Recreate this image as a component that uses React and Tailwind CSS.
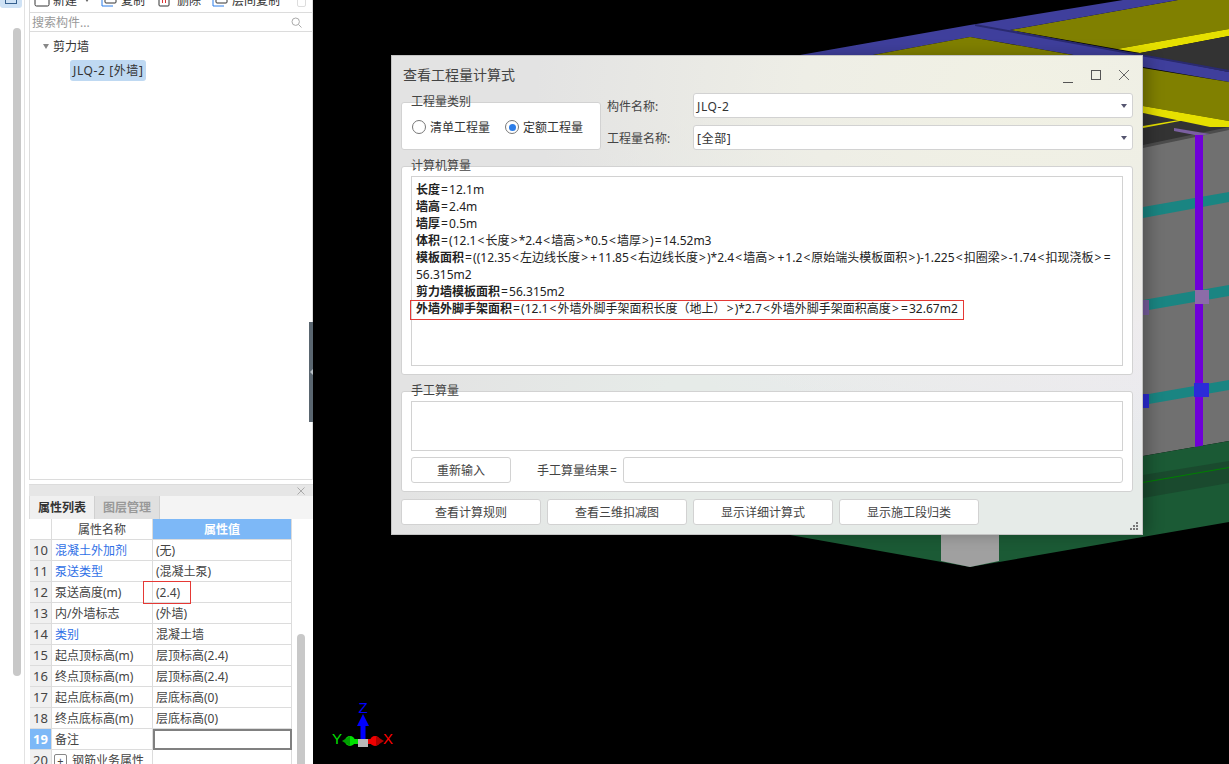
import React from "react";

const F = "font-['Noto_Sans','Noto_Sans_CJK_SC',sans-serif]";

const rows = [
  ["10", "混凝土外加剂", "(无)", true],
  ["11", "泵送类型", "(混凝土泵)", true],
  ["12", "泵送高度(m)", "(2.4)", false],
  ["13", "内/外墙标志", "(外墙)", false],
  ["14", "类别", "混凝土墙", true],
  ["15", "起点顶标高(m)", "层顶标高(2.4)", false],
  ["16", "终点顶标高(m)", "层顶标高(2.4)", false],
  ["17", "起点底标高(m)", "层底标高(0)", false],
  ["18", "终点底标高(m)", "层底标高(0)", false],
];

function Ops({ children }) {
  return children.split(/([<>=+])/).map((part, i) =>
    /^[<>=+]$/.test(part) ? (
      <span key={i} className="mx-[1.1px]">{part}</span>
    ) : (
      <React.Fragment key={i}>{part}</React.Fragment>
    )
  );
}

function Scene() {
  return (
    <svg viewBox="313 0 916 764" className="absolute inset-0 w-full h-full">
      <rect x="313" y="0" width="916" height="764" fill="#000" />
      <polygon points="1010,30 1178,0 1229,0 1229,29 1117,49" fill="#808000" />
      <polygon points="1117,49 1229,29 1229,36 1140,53" fill="#e6e000" />
      <polygon points="1140,53 1229,36 1229,72 1100,50" fill="#333333" />
      <polygon points="800,55 970,25 1123,0 1178,0 1010,30 1229,72 1229,82 970,37 873,55" fill="#3f3f9c" />
      <polygon points="975,24 1229,70 1229,72 975,26" fill="#2a2a70" />
      <polygon points="873,55 970,37 1073,55" fill="#808000" />
      <polygon points="1143,68 1229,82 1229,121 1143,106" fill="#808000" />
      <polygon points="1143,113 1229,127 1229,150 1143,150" fill="#333333" />
      <polygon points="1143,106 1229,121 1229,127 1210,127 1143,113" fill="#e6e000" />
      <polygon points="1143,126 1185,119 1185,120 1143,128" fill="#e6e000" />
      <polygon points="1143,145 1229,127 1229,134 1143,149" fill="#4c4c4c" />
      <polygon points="1143,148 1229,130 1229,441 1143,456" fill="#707070" />
      <polygon points="1143,207 1229,192 1229,202 1143,218" fill="#1a8582" />
      <polygon points="1143,300 1229,285 1229,296 1143,311" fill="#1a8582" />
      <polygon points="1143,395 1229,380 1229,390 1143,405" fill="#1a8582" />
      <polygon points="1174,128 1210,134 1200,136 1174,131" fill="#7a5fa0" />
      <rect x="1195" y="135" width="8" height="312" fill="#6f00d8" />
      <rect x="1195" y="290" width="14" height="14" fill="#8c6ca8" />
      <rect x="1143" y="300" width="6" height="15" fill="#7a5fa0" />
      <rect x="1194" y="383" width="15" height="14" fill="#2b2bd8" />
      <rect x="1143" y="394" width="6" height="14" fill="#2b2bd8" />
      <polygon points="1143,456 1229,441 1229,522 970,567 790,535 790,500" fill="#1b5a35" />
      <polygon points="1143,475 1229,461 1229,483 1143,498" fill="#1a4a2e" />
      <polygon points="1143,482 1229,467 1229,468 1143,483" fill="#008000" />
      <polygon points="941,535 999,535 999,561 970,567 941,561" fill="#a0a0a0" />
      <rect x="360.5" y="722" width="5" height="18" fill="#0000ff" />
      <polygon points="363,714 369,726 357,726" fill="#0000ff" />
      <rect x="350" y="739" width="9" height="5" fill="#00e000" />
      <circle cx="350" cy="741" r="5" fill="#00e000" />
      <polygon points="342,741 350,736 350,746" fill="#00a000" />
      <rect x="368" y="739" width="8" height="5" fill="#f00000" />
      <circle cx="375" cy="741" r="5" fill="#f00000" />
      <polygon points="384,741 376,736 376,746" fill="#b00000" />
      <rect x="358" y="739" width="10" height="8" fill="#b8b8b8" />
      <text x="363" y="713" textAnchor="middle" fontSize="15" fill="#0000ff" fontFamily="Liberation Sans">Z</text>
      <text x="337" y="744" textAnchor="middle" fontSize="15" fill="#00e000" fontFamily="Liberation Sans">Y</text>
      <text x="388" y="744" textAnchor="middle" fontSize="15" fill="#ff0000" fontFamily="Liberation Sans">X</text>
    </svg>
  );
}

function Group({ label, className, children }) {
  return (
    <div className={`relative bg-white border border-[#d2d2d2] rounded-[3px] ${className}`}>
      <span className="absolute left-[9px] -top-[9px] leading-[16px] text-[#444]">{label}</span>
      {children}
    </div>
  );
}

function Field({ label, value }) {
  return (
    <div className="flex items-center h-[25px]">
      <span className="w-[86px] text-[#444] pt-[2px]">{label}</span>
      <div className="flex-1 h-full bg-white border border-[#d2d2d2] rounded-[3px] flex items-center justify-between pl-[3px] pr-[5px]">
        <span className="text-[#333] tracking-[0.6px] pt-[2px]">{value}</span>
        <span className="w-0 h-0 border-x-[3px] border-x-transparent border-t-[4px] border-t-[#555570]" />
      </div>
    </div>
  );
}

function Radio({ on, label }) {
  return (
    <div className="flex items-center gap-[4px]">
      <span className="w-[14px] h-[14px] rounded-full border border-[#777] bg-white flex items-center justify-center">
        {on && <span className="w-[7px] h-[7px] rounded-full bg-[#2b7de9]" />}
      </span>
      <span className="text-[#333]">{label}</span>
    </div>
  );
}

function Btn({ children, className }) {
  return (
    <div className={`h-[26px] bg-white border border-[#d2d2d2] rounded-[3px] flex items-center justify-center text-[#444] ${className}`}>
      {children}
    </div>
  );
}

function Dialog() {
  return (
    <div className="absolute left-[78px] top-[55px] w-[752px] h-[480px] border border-[#c4c4c4] px-[9px] text-[12px] leading-[17px] shadow-[6px_0_14px_rgba(0,0,0,0.25)] bg-[radial-gradient(ellipse_at_85%_8%,#f1f1e4_0%,#eeeee6_25%,transparent_55%),radial-gradient(ellipse_at_100%_55%,#eee9f6_0%,transparent_45%),radial-gradient(ellipse_at_70%_100%,#e6ebe8_0%,#e6ebe8_40%,transparent_70%),linear-gradient(90deg,#e3e3e3_0%,#e3e3e3_45%,#e9e9ee_100%)]">
      <div className="h-[37px] flex items-center justify-between -mr-[1px] pr-[5px] pl-[2px]">
        <span className="text-[14px] text-[#444]">查看工程量计算式</span>
        <div className="flex items-center gap-[18px]">
          <svg width="10" height="10" viewBox="0 0 10 10" className="translate-y-[3px]"><path d="M0 9.5H10" stroke="#555" fill="none" /></svg>
          <svg width="10" height="10" viewBox="0 0 10 10"><rect x="0.5" y="0.5" width="9" height="9" stroke="#555" fill="none" /></svg>
          <svg width="10" height="10" viewBox="0 0 10 10"><path d="M0 0L10 10M10 0L0 10" stroke="#666" fill="none" /></svg>
        </div>
      </div>
      <div className="flex">
        <Group label="工程量类别" className="w-[200px] h-[48px] mt-[9px] flex items-center gap-[15px] pl-[10px] pt-[2px]">
          <Radio label="清单工程量" />
          <Radio on label="定额工程量" />
        </Group>
        <div className="flex-1 ml-[6px] flex flex-col gap-[7px]">
          <Field label="构件名称:" value="JLQ-2" />
          <Field label="工程量名称:" value="[全部]" />
        </div>
      </div>
      <Group label="计算机算量" className="mt-[16px] h-[209px] px-[9px] pt-[9px]">
        <div className="relative h-[190px] border border-[#d2d2d2] pl-[4px] pt-[4px] text-[#222] whitespace-nowrap">
          <div><b>长度</b><Ops>=12.1m</Ops></div>
          <div><b>墙高</b><Ops>=2.4m</Ops></div>
          <div><b>墙厚</b><Ops>=0.5m</Ops></div>
          <div><b>体积</b><Ops>{"=(12.1<长度>*2.4<墙高>*0.5<墙厚>)=14.52m3"}</Ops></div>
          <div><b>模板面积</b><Ops>{"=((12.35<左边线长度>+11.85<右边线长度>)*2.4<墙高>+1.2<原始端头模板面积>)-1.225<扣圈梁>-1.74<扣现浇板>="}</Ops></div>
          <div>56.315m2</div>
          <div><b>剪力墙模板面积</b><Ops>=56.315m2</Ops></div>
          <div><b>外墙外脚手架面积</b><Ops>{"=(12.1<外墙外脚手架面积长度（地上）>)*2.7<外墙外脚手架面积高度>=32.67m2"}</Ops></div>
          <div className="absolute left-[-2px] top-[123px] w-[554px] h-[20px] border border-[#e53935]" />
        </div>
      </Group>
      <Group label="手工算量" className="mt-[16px] h-[101px] px-[9px] pt-[9px]">
        <div className="h-[50px] border border-[#d2d2d2]" />
        <div className="flex items-center mt-[6px]">
          <Btn className="w-[100px]">重新输入</Btn>
          <span className="ml-[26px] w-[86px] text-[#444] whitespace-nowrap"><Ops>手工算量结果=</Ops></span>
          <div className="flex-1 h-[26px] border border-[#d2d2d2] rounded-[3px]" />
        </div>
      </Group>
      <div className="flex gap-[6px] mt-[7px]">
        <Btn className="w-[140px]">查看计算规则</Btn>
        <Btn className="w-[140px]">查看三维扣减图</Btn>
        <Btn className="w-[140px]">显示详细计算式</Btn>
        <Btn className="w-[140px]">显示施工段归类</Btn>
      </div>
      <svg width="10" height="10" viewBox="0 0 10 10" className="absolute right-[3px] bottom-[3px]">
        <path d="M7 1h2v2H7zM4 4h2v2H4zM7 4h2v2H7zM1 7h2v2H1zM4 7h2v2H4zM7 7h2v2H7z" fill="#777" />
      </svg>
    </div>
  );
}

function ToolIcon({ kind }) {
  if (kind === "new") return <svg width="16" height="16" viewBox="0 0 16 16"><rect x="1" y="1" width="14" height="13" rx="1.5" fill="none" stroke="#333" /></svg>;
  if (kind === "del") return <svg width="16" height="16" viewBox="0 0 16 16"><rect x="3" y="1" width="10" height="13" rx="1" fill="none" stroke="#333" /><path d="M6.5 4v7M9.5 4v7" stroke="#d33" /></svg>;
  return <svg width="16" height="16" viewBox="0 0 16 16"><rect x="4" y="1" width="11" height="10" rx="1" fill="none" stroke="#333" /><path d="M1 4v10h11" fill="none" stroke="#2b7de9" /></svg>;
}

function LeftPanel() {
  return (
    <aside className="w-[313px] shrink-0 h-full bg-white flex relative">
      <div className="w-[25px] shrink-0 border-r border-[#e2e2e2] relative">
        <div className="h-[8px] w-[22px] bg-[#cfe2f5] rounded-b-[3px] overflow-hidden flex justify-center">
          <span className="block w-[12px] h-[4px] border-x border-b border-[#35608f]" />
        </div>
        <div className="ml-[13px] mt-[20px] w-[8px] h-[648px] rounded-[4px] bg-[#c8c8c8]" />
      </div>
      <div className="w-[284px] ml-[4px] shrink-0 flex flex-col">
        <div className="h-[480px] border-x border-b border-[#dcdcdc] flex flex-col">
          <div className="h-[13px] border-b border-[#dcdcdc] overflow-hidden">
            <div className="h-[24px] -mt-[12px] flex items-center text-[#333] pl-[4px]">
              <ToolIcon kind="new" /><span className="ml-[3px]">新建</span>
              <span className="ml-[8px] w-0 h-0 border-x-[2px] border-x-transparent border-t-[3px] border-t-[#666]" />
              <span className="ml-[12px]"><ToolIcon kind="copy" /></span><span className="ml-[4px]">复制</span>
              <span className="ml-[11px]"><ToolIcon kind="del" /></span><span className="ml-[5px]">删除</span>
              <span className="ml-[11px]"><ToolIcon kind="copy" /></span><span className="ml-[4px]">层间复制</span>
              <span className="ml-[17px] w-[9px] h-[14px] border border-[#ddd] rounded-[2px]" />
            </div>
          </div>
          <div className="h-[19px] border-b border-[#dcdcdc] flex items-center justify-between pl-[2px] pr-[10px]">
            <span className="text-[#999]">搜索构件...</span>
            <svg width="11" height="11" viewBox="0 0 11 11"><circle cx="4.7" cy="4.7" r="3.7" fill="none" stroke="#aaa" /><path d="M7.5 7.5L10.5 10.5" stroke="#aaa" /></svg>
          </div>
          <div className="pt-[6px]">
            <div className="flex items-center h-[17px] pl-[13px]">
              <span className="w-0 h-0 border-x-[3.5px] border-x-transparent border-t-[5px] border-t-[#888]" />
              <span className="ml-[4px] text-[#333]">剪力墙</span>
            </div>
            <div className="ml-[40px] mt-[5px] w-[76px] h-[21px] rounded-[3px] bg-[#bfd9f2] pl-[3px] flex items-center text-[#333] tracking-[0.6px] whitespace-nowrap">
              JLQ-2 [外墙]
            </div>
          </div>
        </div>
        <div className="mt-[4px] h-[12px] bg-[#e6e6e6] flex items-center justify-end pr-[5px] border-t border-[#dcdcdc]">
          <svg width="8" height="8" viewBox="0 0 8 8" className="-translate-x-[3px]"><path d="M0.5 0.5L7.5 7.5M7.5 0.5L0.5 7.5" stroke="#aaa" /></svg>
        </div>
        <div className="flex h-[23px] bg-[#f4f4f4]">
          <div className="w-[65px] bg-[#f0f0f0] border-l border-[#dcdcdc] flex items-center justify-center font-bold text-[#333]">属性列表</div>
          <div className="w-[66px] bg-[#e0e0e0] border-x border-[#d0d0d0] flex items-center justify-center font-bold text-[#999]">图层管理</div>
        </div>
        <div className="relative flex-1 overflow-hidden">
          <div className="ml-[1px] w-[262px] grid grid-cols-[22px_101px_139px] auto-rows-[21px]">
            <div className="border-b border-r border-[#dcdcdc]" />
            <div className="border-b border-r border-[#dcdcdc] flex items-center justify-center text-[#444]">属性名称</div>
            <div className="border-b border-r border-[#dcdcdc] bg-[#7db8f7] flex items-center justify-center text-white font-bold">属性值</div>
            {rows.map(([n, k, v, blue]) => (
              <React.Fragment key={n}>
                <div className="border-b border-r border-[#dcdcdc] bg-[#f0f0f0] flex items-center justify-center text-[13px] text-[#444]">{n}</div>
                <div className={`border-b border-r border-[#dcdcdc] flex items-center pl-[3px] ${blue ? "text-[#2f6fe6]" : "text-[#444]"}`}>{k}</div>
                <div className="border-b border-r border-[#dcdcdc] flex items-center pl-[3px] text-[#444]">{v}</div>
              </React.Fragment>
            ))}
            <div className="border-b border-r border-[#dcdcdc] bg-[#7db8f7] flex items-center justify-center text-[13px] font-bold text-white">19</div>
            <div className="border-b border-r border-[#dcdcdc] flex items-center pl-[3px] text-[#444]">备注</div>
            <div className="border-2 border-[#808080] bg-white" />
            <div className="border-r border-[#dcdcdc] bg-[#f0f0f0] flex items-center justify-center text-[13px] text-[#444]">20</div>
            <div className="border-r border-[#dcdcdc] flex items-center pl-[2px] text-[#444] whitespace-nowrap">
              <span className="w-[13px] h-[13px] border border-[#888] rounded-[2px] flex items-center justify-center text-[11px] leading-none mr-[5px]">+</span>钢筋业务属性
            </div>
            <div className="border-r border-[#dcdcdc]" />
          </div>
          <div className="absolute left-[114px] top-[62px] w-[48px] h-[23px] border border-[#e53935]" />
          <div className="absolute left-[268px] top-[115px] w-[8px] h-[140px] rounded-[4px] bg-[#c8c8c8]" />
        </div>
      </div>
      <div className="absolute right-0 top-[322px] w-[4px] h-[100px] bg-[#5a6670] flex items-center justify-center">
        <span className="w-0 h-0 border-y-[3px] border-y-transparent border-r-[3px] border-r-[#b8c0c6]" />
      </div>
    </aside>
  );
}

export default function App() {
  return (
    <div className={`w-[1229px] h-[764px] overflow-hidden flex bg-black text-[12px] leading-[17px] ${F}`}>
      <LeftPanel />
      <main className="relative flex-1">
        <Scene />
        <Dialog />
      </main>
    </div>
  );
}
